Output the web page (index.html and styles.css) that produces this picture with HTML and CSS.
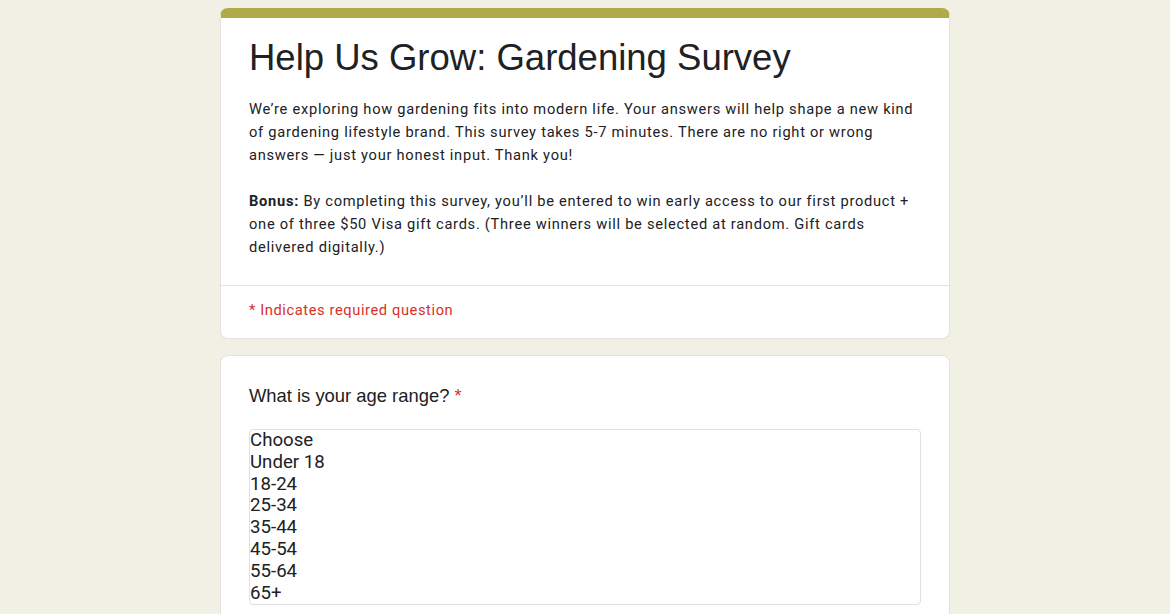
FILE: index.html
```html
<!DOCTYPE html>
<html lang="en">
<head>
<meta charset="utf-8">
<title>Help Us Grow: Gardening Survey</title>
<link rel="stylesheet" href="styles.css">
</head>
<body>
<main class="form">
  <section class="card header-card">
    <div class="header-main">
      <h1 class="title">Help Us Grow: Gardening Survey</h1>
      <p class="desc">We’re exploring how gardening fits into modern life. Your answers will help shape a new kind of gardening lifestyle brand. This survey takes 5-7 minutes. There are no right or wrong answers — just your honest input. Thank you!<br><br><b>Bonus:</b> By completing this survey, you’ll be entered to win early access to our first product + one of three $50 Visa gift cards. (Three winners will be selected at random. Gift cards delivered digitally.)</p>
    </div>
    <div class="required-note">* Indicates required question</div>
  </section>
  <section class="card question-card">
    <div class="question">What is your age range? <span class="star">*</span></div>
    <div class="listbox" role="listbox" aria-label="What is your age range?">
      <div class="opt" role="option">Choose</div>
      <div class="opt" role="option">Under 18</div>
      <div class="opt" role="option">18-24</div>
      <div class="opt" role="option">25-34</div>
      <div class="opt" role="option">35-44</div>
      <div class="opt" role="option">45-54</div>
      <div class="opt" role="option">55-64</div>
      <div class="opt" role="option">65+</div>
    </div>
  </section>
</main>
</body>
</html>
```
FILE: styles.css
```css
html, body {
  margin: 0;
  padding: 0;
}
body {
  background: #f0f0e4;
  color: #202124;
  font-family: Roboto, "Liberation Sans", Arial, sans-serif;
}
.form {
  width: 730px;
  margin: 0 auto;
  padding-top: 8px;
  display: flex;
  flex-direction: column;
  gap: 16px;
}
.card {
  background: #fff;
  border: 1px solid #e2e3e0;
  border-radius: 8px;
}
.header-card {
  border-top: 10px solid #b0ab4a;
}
.header-main {
  padding: 18px 28px 26px 28px;
  border-bottom: 1px solid #e2e3e0;
}
.title {
  margin: 0;
  font-family: "Liberation Sans", Arial, sans-serif;
  font-weight: 400;
  font-size: 36.5px;
  line-height: 43px;
  color: #202124;
}
.desc {
  margin: 19px 0 0;
  font-size: 14.67px;
  line-height: 23px;
  letter-spacing: 0.72px;
  color: #202124;
}
.desc b {
  font-weight: 700;
}
.required-note {
  padding: 13px 28px 17px;
  font-size: 14.67px;
  line-height: 22px;
  letter-spacing: 0.6px;
  color: #d93025;
}
.question-card {
  padding: 28px 28px 24px;
}
.question {
  font-family: "Liberation Sans", Arial, sans-serif;
  font-size: 18.4px;
  line-height: 24px;
  color: #202124;
}
.star {
  color: #d93025;
}
.listbox {
  margin-top: 21px;
  border: 1px solid #e0e0e0;
  border-radius: 4px;
  padding: 0;
}
.opt {
  font-size: 18.67px;
  line-height: 21.8px;
  color: #202124;
}
```
